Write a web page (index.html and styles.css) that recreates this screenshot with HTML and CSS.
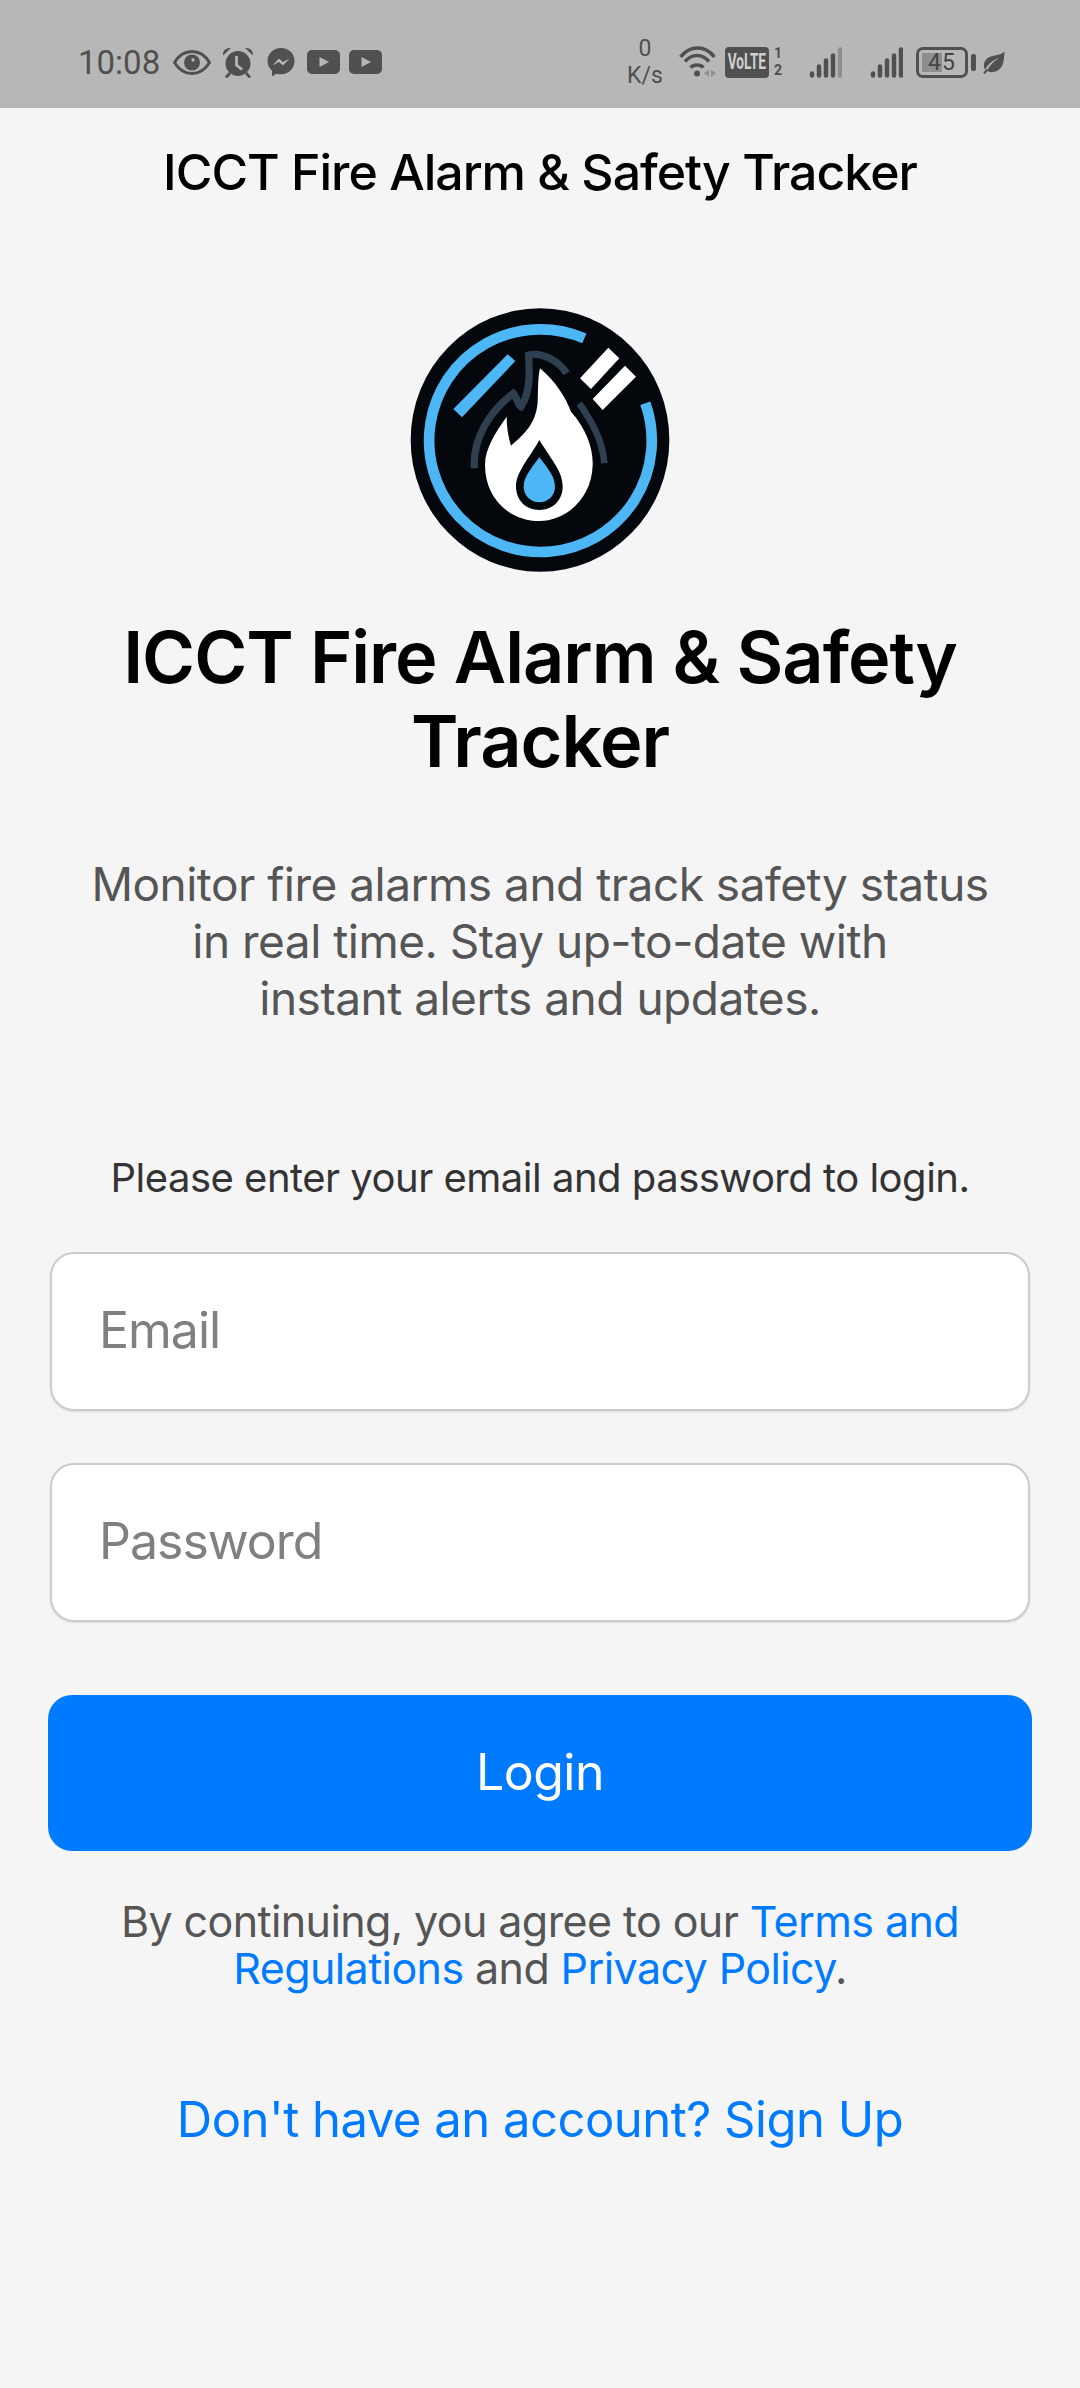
FILE: index.html
```html
<!DOCTYPE html>
<html lang="en">
<head>
  <meta charset="UTF-8" />
  <meta name="viewport" content="width=device-width, initial-scale=1" />
  <title>ICCT Fire Alarm &amp; Safety Tracker</title>
  <link rel="stylesheet" href="styles.css">
</head>
<body>

<!-- Status bar -->
<div class="statusbar">
  <div class="status-left">
    <span class="time">10:08</span>
    <svg class="ic-eye" viewBox="0 0 38 25"><path d="M1.500 12.500C6 5 12 1.500 19 1.500S32 5 36.500 12.500C32 20 26 23.500 19 23.500S6 20 1.500 12.500Z" fill="none" stroke="#505050" stroke-width="3"/><circle cx="19" cy="12.500" r="8" fill="#505050"/><circle cx="20" cy="10" r="1.700" fill="#b7b7b7"/></svg>
    <svg class="ic-alarm" viewBox="0 0 32 31"><circle cx="16" cy="16.500" r="12.500" fill="#505050"/><path d="M1 8.500C.5 3.500 4 .5 9 1ZM31 8.500C31.500 3.500 28 .5 23 1Z" fill="#505050"/><path d="M8 26l-4 4.500M24 26l4 4.500" stroke="#505050" stroke-width="2.800"/><path d="M14.500 9v9l5.500 4.500" fill="none" stroke="#b7b7b7" stroke-width="2.800"/></svg>
    <svg class="ic-msg" viewBox="0 0 28 30"><path d="M14 1C6.300 1 .5 6.800.5 14c0 4 1.700 7.400 4.500 9.800V29.500l4.700-2.800c1.400.4 2.800.6 4.300.6 7.700 0 13.500-5.800 13.500-13.300S21.700 1 14 1Z" fill="#505050"/><path d="M5.500 18.500l6.500-7 4 3.500 6.500-3.500-6.500 7-4-3.500Z" fill="#b7b7b7"/></svg>
    <svg class="ic-yt" viewBox="0 0 33 24"><rect width="33" height="24" rx="5" fill="#505050"/><path d="M12.500 7l9.500 5-9.500 5Z" fill="#b7b7b7"/></svg>
    <svg class="ic-yt" viewBox="0 0 33 24"><rect width="33" height="24" rx="5" fill="#505050"/><path d="M12.500 7l9.500 5-9.500 5Z" fill="#b7b7b7"/></svg>
  </div>
  <div class="status-right">
    <div class="netspeed"><span>0</span><span>K/s</span></div>
    <svg class="ic-wifi" viewBox="0 0 37 32"><g fill="none" stroke="#505050" stroke-width="3.500"><path d="M1.500 11C11-1 26-1 35.500 11"/><path d="M6 15.500C13 7.500 23 7.500 30 15.500"/><path d="M11.500 21.500C15 18 21 18 24.500 21.500"/></g><circle cx="18" cy="27.500" r="3" fill="#505050"/><path d="M30 23.500V31l-5-3.700ZM32 23.500V31l5-3.700Z" fill="#919191"/></svg>
    <div class="volte"><span>VoLTE</span></div>
    <div class="sim"><span>1</span><span>2</span></div>
    <svg class="ic-signal sig-first" viewBox="0 0 33 31"><g fill="none" stroke="#505050" stroke-width="4.500" stroke-linecap="round"><path d="M3 26.500v2M10 19.500v9M17 13.500v15M24 8.500v20"/></g><path d="M31 2.500v26" fill="none" stroke="#8e8e8e" stroke-width="4.500" stroke-linecap="round"/></svg>
    <svg class="ic-signal sig-second" viewBox="0 0 33 31"><g fill="none" stroke="#505050" stroke-width="4.500" stroke-linecap="round"><path d="M3 26.500v2M10 19.500v9M17 13.500v15M24 8.500v20M31 2.500v26"/></g></svg>
    <div class="battery"><span class="battery-fill"></span><span class="battery-num">45</span></div>
    <svg class="ic-leaf" viewBox="0 0 22 23"><path d="M21.500.5C21 11 20 20 10 21c-3 .5-5-.5-6-1.500C7 14 11 10 16 7 10 9 5 13 2 19-1 13 2 7 9 5c5-1 10-1.500 12.500-4.500Z" fill="#505050"/><path d="M4.500 18.500L1 22.500" stroke="#505050" stroke-width="2"/></svg>
  </div>
</div>

<div class="topbar">ICCT Fire Alarm &amp; Safety Tracker</div>

<div class="content">
  <svg class="logo" viewBox="62 47 780 796">
    <ellipse cx="452" cy="445" rx="388" ry="395" fill="#04070c"/>
    <path d="M585 140A334 334 0 1 0 768 335" fill="none" stroke="#4db6f5" stroke-width="32"/>
    <path d="M355 188L378 208 218 377 192 352Z" fill="#4db6f5"/>
    <path d="M657 168L690 200 605 292 572 260ZM707 222L740 255 640 355 610 322Z" fill="#fff"/>
    <g fill="none" stroke="#2e3f4f">
      <path d="M255 530C250 440 300 360 372 305 385 320 385 340 395 345 425 300 420 240 418 190 460 180 510 210 532 245" stroke-width="22"/>
      <path d="M570 335C600 380 640 440 645 515" stroke-width="20"/>
    </g>
    <path d="M452 230C500 270 530 320 545 360 590 410 612 470 610 520 608 620 530 688 450 688 360 688 287 620 287 520 287 470 320 420 352 375 352 410 358 440 365 462 400 430 440 400 445 330 447 290 445 260 452 230Z" fill="#fff"/>
    <path d="M450 445C490 510 520 540 520 585 520 625 490 655 450 655 410 655 380 625 380 585 380 540 420 500 450 445Z" fill="#04070c"/>
    <path d="M450 497C475 530 497 555 497 585 497 612 475 632 450 632 425 632 403 612 403 585 403 555 430 525 450 497Z" fill="#4db6f5"/>
  </svg>

  <h1>ICCT Fire Alarm &amp; Safety<br>Tracker</h1>
  <p class="subtitle">Monitor fire alarms and track safety status<br>in real time. Stay up-to-date with<br>instant alerts and updates.</p>

  <form class="login">
    <p class="prompt">Please enter your email and password to login.</p>
    <input type="email" placeholder="Email">
    <input type="password" placeholder="Password">
    <button type="button">Login</button>
  </form>

  <p class="legal">By continuing, you agree to our <a href="#">Terms and<br>Regulations</a> and <a href="#">Privacy Policy</a>.</p>
  <a class="signup" href="#">Don't have an account? Sign Up</a>
</div>

</body>
</html>
```

FILE: styles.css
```css
:root {
  --bg: #f5f5f5; --bar: #b7b7b7; --icon: #505050;
  --accent: #007bff; --sub: #555;
}
* { box-sizing: border-box; }
body {
  background: var(--bg); color: #000; font-family: Inter, sans-serif;
  margin: 0; height: 2388px; overflow: hidden;
}

/* status bar */
.statusbar {
  height: 108px; background: var(--bar); color: var(--icon);
  display: flex; justify-content: space-between; align-items: center;
  padding: 16px 75px 0 78px;
}
.status-left, .status-right { display: flex; align-items: center; }
.time { font-family: Roboto, sans-serif; font-size: 33px; width: 83px; }
.ic-eye { width: 38px; height: 25px; margin-left: 12px; }
.ic-alarm { width: 32px; height: 31px; margin-left: 11px; }
.ic-msg { width: 28px; height: 30px; margin-left: 13px; }
.ic-yt { width: 33px; height: 24px; margin-left: 12px; }
.ic-yt + .ic-yt { margin-left: 9px; }
.netspeed {
  font-family: Roboto, sans-serif; font-size: 23px; line-height: 27px;
  display: flex; flex-direction: column; align-items: center; width: 34px;
}
.ic-wifi { width: 37px; height: 32px; margin-left: 17px; }
.volte {
  width: 44px; height: 31px; margin-left: 9px; background: var(--icon); border-radius: 4px;
  display: flex; align-items: center; justify-content: center;
  font-family: Roboto, sans-serif; font-weight: 700; font-size: 22px; line-height: 1; color: #d0d0d0;
}
.volte span { flex-shrink: 0; transform: scaleX(0.62); }
.sim {
  font-family: Roboto, sans-serif; font-weight: 700; font-size: 14px; line-height: 17px;
  display: flex; flex-direction: column; width: 8px; margin-left: 5px;
}
.ic-signal { width: 33px; height: 31px; }
.sig-first { margin-left: 27px; }
.sig-second { margin-left: 28px; }
.battery {
  position: relative; width: 52px; height: 31px; margin-left: 13px; margin-right: 9px;
  border: 3px solid var(--icon); border-radius: 7px;
  display: flex; align-items: center; justify-content: center;
}
.battery::after {
  content: ""; position: absolute; right: -11px; top: 4px;
  width: 5px; height: 17px; background: var(--icon); border-radius: 2px;
}
.battery-fill { position: absolute; left: 3px; top: 3px; bottom: 3px; width: 20px; background: #8e8e8e; }
.battery-num {
  position: relative; font-family: Roboto, sans-serif; font-size: 23px; line-height: 1;
  letter-spacing: 1px; color: #444;
}
.ic-leaf { width: 22px; height: 23px; margin-left: 6px; }

/* header */
.topbar {
  height: 128px; display: flex; align-items: center; justify-content: center;
  font-size: 50px; font-weight: 500; letter-spacing: -1px;
}

/* main */
.content { display: flex; flex-direction: column; align-items: center; padding: 71px 48px 0; }
.logo { width: 260px; height: 266px; display: block; }
h1 {
  text-align: center; font-size: 72px; font-weight: 600; line-height: 84px;
  margin: 42px 0 0; letter-spacing: -1px; white-space: nowrap;
}
.subtitle {
  text-align: center; font-size: 46px; line-height: 57px; color: var(--sub);
  margin: 73px 0 0; letter-spacing: -0.5px; white-space: nowrap;
}
.login { display: flex; flex-direction: column; width: 100%; align-items: center; margin-top: 126px; }
.prompt { font-size: 40px; line-height: 50px; color: #333; margin: 0 0 49px; letter-spacing: -0.5px; }
input {
  width: 980px; height: 159px; background: #fff; border: 2px solid #ccc; border-radius: 24px;
  padding: 0 47px 4px; font: 50px Inter, sans-serif; letter-spacing: -1px; margin-bottom: 52px; outline: none;
  box-shadow: 0 1px 2px rgba(0, 0, 0, 0.1);
}
input::placeholder { color: #808080; opacity: 1; }
button {
  width: 984px; height: 156px; background: var(--accent); color: #fff; border: none;
  border-radius: 24px; font: 50px Inter, sans-serif; letter-spacing: -0.5px; margin-top: 21px; padding: 0 0 2px;
}
.legal {
  text-align: center; font-size: 43px; line-height: 47px; color: var(--sub);
  margin: 47px 0 0; letter-spacing: -0.6px; white-space: nowrap;
}
.legal a, .signup { color: var(--accent); text-decoration: none; }
.signup { font-size: 49px; line-height: 60px; margin-top: 98px; letter-spacing: -0.5px; }
```
